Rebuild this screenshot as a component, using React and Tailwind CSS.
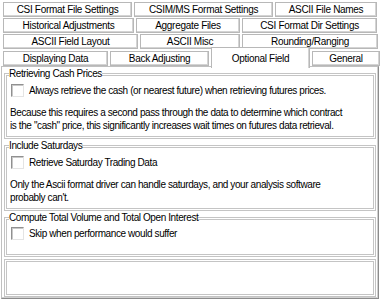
import React from 'react';

const font = { fontFamily: '"Liberation Sans", Arial, sans-serif' };

const Tab = ({ label, className }) => (
  <div
    className={`h-[15px] flex items-center justify-center bg-white border border-[#b8b8b8] shadow-[inset_-1px_-1px_0_#d4d4d4] text-black ${className}`}
  >
    {label}
  </div>
);

const Check = ({ label }) => (
  <div className="flex items-center gap-[5px]">
    <div className="w-[13px] h-[13px] bg-white border-t border-l border-[#909090] border-r border-b border-r-[#e4e4e4] border-b-[#e4e4e4] shadow-[inset_1px_1px_0_#c8c8c8]" />
    <span>{label}</span>
  </div>
);

const Group = ({ title, className, children }) => (
  <fieldset className={`border-[3px] border-double border-[#c4c4c4] px-[3px] ${className}`}>
    <legend className="px-0 leading-[12px] ml-[-1px]">{title}</legend>
    {children}
  </fieldset>
);

const App = () => {
  return (
    <div className="w-[380px] h-[300px] bg-white overflow-hidden text-[10px] tracking-[-0.3px] text-black" style={font}>
      <div className="flex flex-col gap-[1px] pt-[2px] pl-[3px]">
        <div className="flex gap-[2px]">
          <Tab label="CSI Format File Settings" className="w-[129px]" />
          <Tab label="CSIM/MS Format Settings" className="w-[139px]" />
          <Tab label="ASCII File Names" className="w-[102px]" />
        </div>
        <div className="flex gap-[2px]">
          <Tab label="Historical Adjustments" className="w-[131px]" />
          <Tab label="Aggregate Files" className="w-[104px]" />
          <Tab label="CSI Format Dir Settings" className="w-[135px]" />
        </div>
        <div className="flex gap-[2px]">
          <Tab label="ASCII Field Layout" className="w-[135px]" />
          <Tab label="ASCII Misc" className="w-[100px]" />
          <Tab label="Rounding/Ranging" className="w-[136px]" />
        </div>
        <div className="flex items-end gap-[2px] h-[16px]">
          <Tab label="Displaying Data" className="w-[105px]" />
          <Tab label="Back Adjusting" className="w-[99px]" />
          <div className="relative z-10 w-[99px] h-[21px] mb-[-2px] flex items-start pt-[3px] justify-center bg-white border border-b-0 border-[#b8b8b8] shadow-[inset_-1px_0_0_#d4d4d4]">
            Optional Field
          </div>
          <Tab label="General" className="w-[68px]" />
        </div>
      </div>
      <div className="ml-[1px] w-[378px] h-[233px] border border-[#c0c0c0] border-r-[#8c8c8c] border-b-[#8c8c8c] shadow-[inset_-1px_-1px_0_#d0d0d0] px-[2px] pt-[1px] flex flex-col gap-[1px] tracking-[-0.4px]">
        <Group title="Retrieving Cash Prices" className="h-[71px]">
          <div className="mt-[3px] ml-[1px]">
            <Check label="Always retrieve the cash (or nearest future) when retrieving futures prices." />
          </div>
          <p className="mt-[8px] leading-[13px] pr-[20px]">
            Because this requires a second pass through the data to determine which contract is the "cash" price, this significantly increases wait times on futures data retrieval.
          </p>
        </Group>
        <Group title="Include Saturdays" className="h-[71px]">
          <div className="mt-[3px] ml-[1px]">
            <Check label="Retrieve Saturday Trading Data" />
          </div>
          <p className="mt-[8px] leading-[13px] pr-[20px]">
            Only the Ascii format driver can handle saturdays, and your analysis software probably can't.
          </p>
        </Group>
        <Group title="Compute Total Volume and Total Open Interest" className="h-[45px]">
          <div className="mt-[2px] ml-[1px]">
            <Check label="Skip when performance would suffer" />
          </div>
        </Group>
        <div className="flex-1 mt-[1px] mb-[1px] border-[3px] border-double border-[#c4c4c4]" />
      </div>
    </div>
  );
};

export default App;
